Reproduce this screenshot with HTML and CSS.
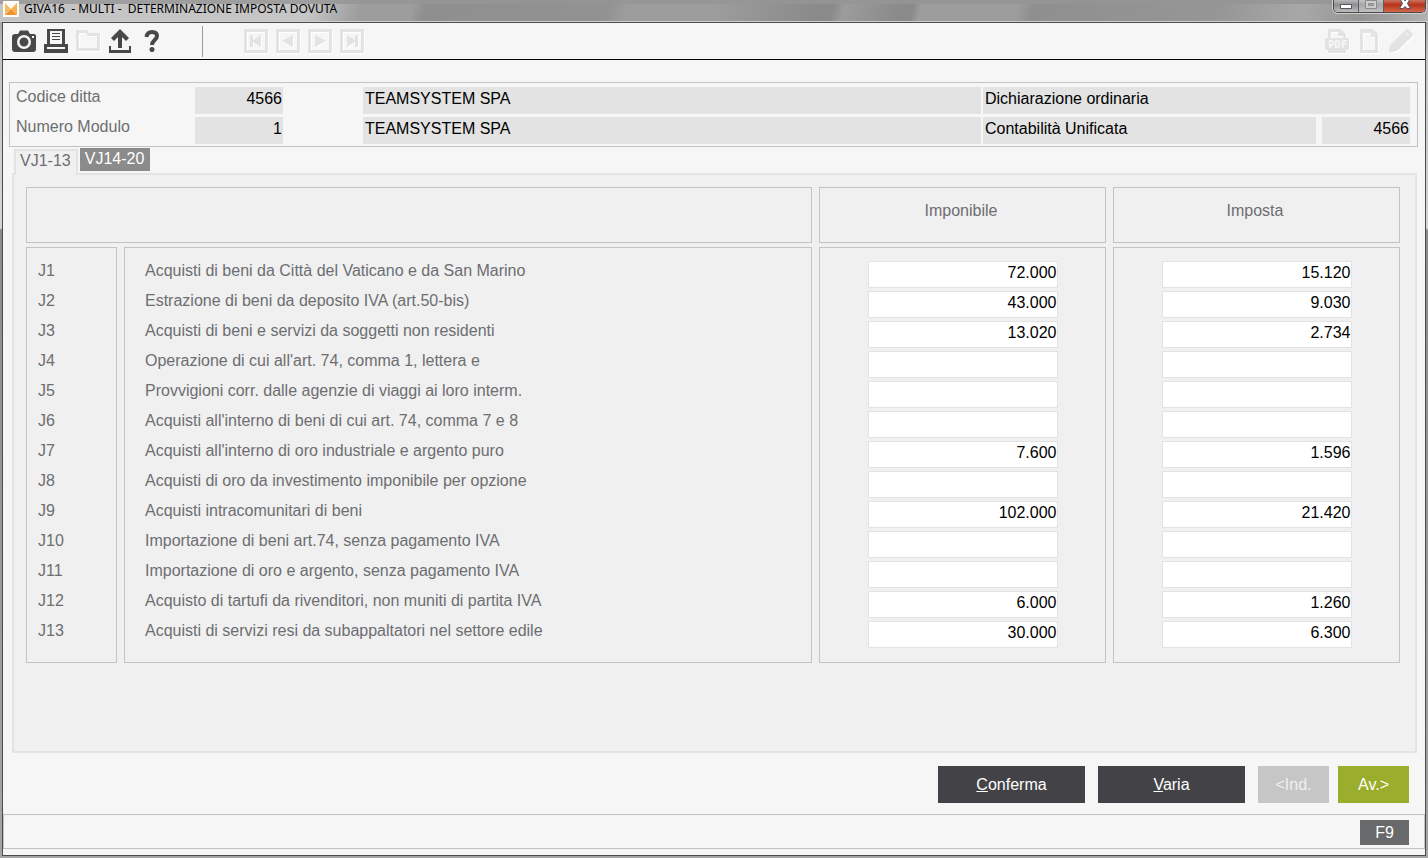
FILE: index.html
```
<!DOCTYPE html>
<html lang="it">
<head>
<meta charset="utf-8">
<title>GIVA16 - MULTI - DETERMINAZIONE IMPOSTA DOVUTA</title>
<link rel="stylesheet" href="styles.css">
</head>
<body>
<div class="window">
  <header class="titlebar">
    <svg class="app-icon" viewBox="0 0 16 16" aria-hidden="true"><path fill="#fdfbf5" d="M0 0h16v16H0z"/><path fill="#f8bb62" d="M2 2l6 6-6 6z"/><path fill="#f6b04c" d="M14 2L8 8l6 6z"/><path fill="#ee912c" d="M2 14l6-6 6 6z"/></svg>
    <h1 class="title">GIVA16  - MULTI -  DETERMINAZIONE IMPOSTA DOVUTA</h1>
    <div class="controls">
      <button class="control" type="button" aria-label="Riduci a icona"><svg width="12" height="5" viewBox="0 0 12 5"><path fill="#fff" stroke="#50576b" d="M.5.5h11v4H.5z"/></svg></button>
      <button class="control control-max" type="button" aria-label="Ingrandisci"><svg width="12" height="9" viewBox="0 0 12 9"><path fill="#ccc" stroke="#8b8b8b" d="M.5.5h11v8H.5zM3.500 3.500v2h5v-2z" fill-rule="evenodd"/></svg></button>
      <button class="control control-close" type="button" aria-label="Chiudi"><svg width="12" height="9" viewBox="0 0 12 9"><path fill="#fff" stroke="#4c5064" d="M1-1h3.500l1.500 2L7.500-1H11L8.500 3.500l3 5H8L6 6.500 4 8.500H.5l3-5z"/></svg></button>
    </div>
  </header>

  <div class="client">
    <nav class="toolbar" aria-label="Strumenti">
      <div class="tools">
        <button class="tool" type="button" aria-label="Cattura"><svg viewBox="0 0 24 24"><path fill-rule="evenodd" d="M8 1.500h8L18 5h4q2 0 2 2v13q0 3-3 3H3q-3 0-3-3V8q0-3 3-3h3zM12 6a7 7 0 1 0 0 14 7 7 0 0 0 0-14zm0 2.500a4.500 4.500 0 1 1 0 9 4.500 4.500 0 0 1 0-9zM20 7v2h2V7z"/></svg></button>
        <button class="tool" type="button" aria-label="Stampa"><svg viewBox="0 0 24 24"><path fill-rule="evenodd" d="M3 0h18v15h3v9H0v-9h3zM6 2v13h12V2zM3 18v2h18v-2z"/><path d="M8 4h8v1H8zM8 7h8v1H8zM8 10h8v1H8z"/></svg></button>
        <button class="tool" type="button" aria-label="Apri" disabled><svg viewBox="0 0 24 24"><path fill-rule="evenodd" d="M0 1h11l2 3h11v18H0zM3 4v15h18V7h-9L10 4z"/></svg></button>
        <button class="tool" type="button" aria-label="Esporta"><svg viewBox="0 0 24 24"><path d="M12 0l9 9-3 3-4-4v11h-4V8l-4 4-3-3z"/><path d="M1 17h2v4h18v-4h2v7H1z"/></svg></button>
        <button class="tool" type="button" aria-label="Aiuto"><svg viewBox="0 0 24 24"><path fill="none" stroke="currentColor" stroke-width="4" d="M6.500 8C7 4.500 9 3 12 3c3.500 0 5 1.500 5 4 0 4-5 4-5 9"/><circle cx="12" cy="20.500" r="2.500"/></svg></button>
      </div>
      <div class="record-nav">
        <button class="tool" type="button" aria-label="Primo" disabled><svg viewBox="0 0 24 24"><path fill-rule="evenodd" d="M0 0h24v24H0zM3 3v18h18V3z"/><path d="M6 6h3v5l8-5v12l-8-5v5H6z"/></svg></button>
        <button class="tool" type="button" aria-label="Precedente" disabled><svg viewBox="0 0 24 24"><path fill-rule="evenodd" d="M0 0h24v24H0zM3 3v18h18V3z"/><path d="M6 12l11-6v12z"/></svg></button>
        <button class="tool" type="button" aria-label="Successivo" disabled><svg viewBox="0 0 24 24"><path fill-rule="evenodd" d="M0 0h24v24H0zM3 3v18h18V3z"/><path d="M18 12L7 6v12z"/></svg></button>
        <button class="tool" type="button" aria-label="Ultimo" disabled><svg viewBox="0 0 24 24"><path fill-rule="evenodd" d="M0 0h24v24H0zM3 3v18h18V3z"/><path d="M18 6h-3v5L7 6v12l8-5v5h3z"/></svg></button>
      </div>
      <div class="tools tools-end">
        <button class="tool" type="button" aria-label="PDF" disabled><svg viewBox="0 0 24 24"><path fill-rule="evenodd" d="M3 0h13l5 5v4h3v12h-3v3H3v-3H0V9h3zM6 3v6h12V7h-5V3z"/><path fill="none" stroke="#f8f8f8" stroke-width="1.500" d="M4.700 19v-7h2q1.700 0 1.700 2t-1.700 2h-2M10.700 12v6.300h1.500q2.200 0 2.200-3.100t-2.200-3.200zM17.700 19v-7H22M17.700 15h3.300"/></svg></button>
        <button class="tool" type="button" aria-label="Nuovo" disabled><svg viewBox="0 0 24 24"><path fill-rule="evenodd" d="M3 0h13l5 5v19H3zM6 4v17h12V8h-4V4z"/></svg></button>
        <button class="tool" type="button" aria-label="Modifica" disabled><svg viewBox="0 0 24 24"><path fill-rule="evenodd" d="M0 24l1-8L16.500 1Q18-.5 20 1l3 3q1.500 1.500 0 3.500L8 22zM16.500 4l3 3 .7-.7-3-3z"/></svg></button>
      </div>
    </nav>

    <main class="content">
      <section class="company" aria-label="Ditta">
        <label class="label" for="codice">Codice ditta</label>
        <input class="field field-num" id="codice" value="4566" readonly>
        <input class="field field-name" aria-label="Ragione sociale" value="TEAMSYSTEM SPA" readonly>
        <input class="field field-wide" aria-label="Dichiarazione" value="Dichiarazione ordinaria" readonly>
        <label class="label" for="modulo">Numero Modulo</label>
        <input class="field field-num" id="modulo" value="1" readonly>
        <input class="field field-name" aria-label="Denominazione modulo" value="TEAMSYSTEM SPA" readonly>
        <input class="field" aria-label="Contabilità" value="Contabilità Unificata" readonly>
        <input class="field field-num field-last" aria-label="Codice contabilità" value="4566" readonly>
      </section>

      <div class="tabs" role="tablist">
        <button class="tab tab-active" type="button" role="tab" aria-selected="true">VJ1-13</button>
        <button class="tab" type="button" role="tab" aria-selected="false">VJ14-20</button>
      </div>

      <section class="panel" role="tabpanel" aria-label="VJ1-13">
        <table class="grid">
          <colgroup><col class="col-code"><col><col class="col-amount"><col class="col-amount"></colgroup>
          <thead>
            <tr><th colspan="2"></th><th>Imponibile</th><th>Imposta</th></tr>
          </thead>
          <tbody>
            <tr><td>J1</td><td class="desc">Acquisti di beni da Città del Vaticano e da San Marino</td><td><input class="amount" aria-label="J1 imponibile" value="72.000"></td><td><input class="amount" aria-label="J1 imposta" value="15.120"></td></tr>
            <tr><td>J2</td><td class="desc">Estrazione di beni da deposito IVA (art.50-bis)</td><td><input class="amount" aria-label="J2 imponibile" value="43.000"></td><td><input class="amount" aria-label="J2 imposta" value="9.030"></td></tr>
            <tr><td>J3</td><td class="desc">Acquisti di beni e servizi da soggetti non residenti</td><td><input class="amount" aria-label="J3 imponibile" value="13.020"></td><td><input class="amount" aria-label="J3 imposta" value="2.734"></td></tr>
            <tr><td>J4</td><td class="desc">Operazione di cui all'art. 74, comma 1, lettera e</td><td><input class="amount" aria-label="J4 imponibile"></td><td><input class="amount" aria-label="J4 imposta"></td></tr>
            <tr><td>J5</td><td class="desc">Provvigioni corr. dalle agenzie di viaggi ai loro interm.</td><td><input class="amount" aria-label="J5 imponibile"></td><td><input class="amount" aria-label="J5 imposta"></td></tr>
            <tr><td>J6</td><td class="desc">Acquisti all'interno di beni di cui art. 74, comma 7 e 8</td><td><input class="amount" aria-label="J6 imponibile"></td><td><input class="amount" aria-label="J6 imposta"></td></tr>
            <tr><td>J7</td><td class="desc">Acquisti all'interno di oro industriale e argento puro</td><td><input class="amount" aria-label="J7 imponibile" value="7.600"></td><td><input class="amount" aria-label="J7 imposta" value="1.596"></td></tr>
            <tr><td>J8</td><td class="desc">Acquisti di oro da investimento imponibile per opzione</td><td><input class="amount" aria-label="J8 imponibile"></td><td><input class="amount" aria-label="J8 imposta"></td></tr>
            <tr><td>J9</td><td class="desc">Acquisti intracomunitari di beni</td><td><input class="amount" aria-label="J9 imponibile" value="102.000"></td><td><input class="amount" aria-label="J9 imposta" value="21.420"></td></tr>
            <tr><td>J10</td><td class="desc">Importazione di beni art.74, senza pagamento IVA</td><td><input class="amount" aria-label="J10 imponibile"></td><td><input class="amount" aria-label="J10 imposta"></td></tr>
            <tr><td>J11</td><td class="desc">Importazione di oro e argento, senza pagamento IVA</td><td><input class="amount" aria-label="J11 imponibile"></td><td><input class="amount" aria-label="J11 imposta"></td></tr>
            <tr><td>J12</td><td class="desc">Acquisto di tartufi da rivenditori, non muniti di partita IVA</td><td><input class="amount" aria-label="J12 imponibile" value="6.000"></td><td><input class="amount" aria-label="J12 imposta" value="1.260"></td></tr>
            <tr><td>J13</td><td class="desc">Acquisti di servizi resi da subappaltatori nel settore edile</td><td><input class="amount" aria-label="J13 imponibile" value="30.000"></td><td><input class="amount" aria-label="J13 imposta" value="6.300"></td></tr>
          </tbody>
        </table>
      </section>

      <div class="actions">
        <button class="btn btn-main" type="button"><u>C</u>onferma</button>
        <button class="btn btn-main" type="button"><u>V</u>aria</button>
        <div class="pager">
          <button class="btn btn-back" type="button" disabled>&lt;Ind.</button>
          <button class="btn btn-next" type="button">Av.&gt;</button>
        </div>
      </div>
    </main>

    <footer class="statusbar"><button class="key" type="button">F9</button></footer>
  </div>
</div>
</body>
</html>
```
FILE: styles.css
```
* { box-sizing: border-box; }

body {
  margin: 0;
  font: 16px/20px "Liberation Sans", Arial, sans-serif;
  color: #6d6e70;
}

button, input { font: inherit; border: 0; margin: 0; border-radius: 0; }
button { padding: 0; }

.window {
  display: flex;
  flex-direction: column;
  min-height: 100vh;
  padding: 0 2px 2px;
  background: linear-gradient(#989898 0, #c4c4c4 60px, #d6d6d6 228px, #8c8c8c 230px, #a5a5a5 100%);
}

/* Title bar */
.titlebar {
  display: flex;
  align-items: flex-start;
  height: 22px;
  margin: 0 -2px;
  border-bottom: 1px solid #cfcfcf;
  background:
    linear-gradient(rgba(149, 149, 149, .8) 4px, transparent 4px),
    linear-gradient(105deg, #c4c4c4 0, #c6c6c6 300px, #9d9d9d 350px, #9d9d9d 400px, #8f8f8f 412px, #929292 590px, #9d9d9d 608px, #9d9d9d 690px, #8a8a8a 790px, #8a8a8a 806px, #9c9c9c 818px, #8a8a8a 870px, #8a8a8a 884px, #9d9d9d 892px, #9d9d9d 985px, #8f8f8f 1000px, #969696 1180px, #a8a8a8 1260px, #949494 1320px, #b2b2b2 100%);
}

.app-icon { width: 16px; height: 16px; margin: 1px 5px 0 3px; }

.title {
  margin: 0;
  font: 400 12px/18px "Noto Sans", sans-serif;
  color: #000;
  white-space: pre;
}

.controls {
  display: flex;
  height: 13px;
  margin: 0 2px 0 auto;
  border: 1px solid #4a4a4a;
  border-top: 0;
  border-radius: 0 0 5px 5px;
  overflow: hidden;
  box-shadow: 0 0 0 1px #d0d0d0;
}

.control {
  display: flex;
  justify-content: center;
  align-items: flex-end;
  width: 25px;
  padding-bottom: 3px;
  border-right: 1px solid #5c5c5c;
  background: linear-gradient(#b9b9b9, #8e8e8e 40%, #bdbdbd);
}
.control-max { background: linear-gradient(#c4c4c4, #a8a8a8 40%, #c2c2c2); }
.control-close { width: 41px; border-right: 0; background: linear-gradient(#cc7361, #b7341b 40%, #d4674c); }

/* Client area */
.client {
  display: flex;
  flex: 1;
  flex-direction: column;
  padding-bottom: 6px;
  border: 1px solid #4c4c4c;
  background: #f6f6f6;
}

.toolbar {
  display: flex;
  align-items: center;
  height: 37px;
  padding: 0 12px 0 9px;
  border-bottom: 1px solid #000;
}
.tools, .record-nav { display: flex; align-items: center; gap: 8px; }
.tools-end { margin-left: auto; }
.record-nav { height: 31px; margin-left: 38px; padding-left: 41px; border-left: 1px solid #9b9b9b; }
.tool { width: 24px; height: 24px; background: none; color: #48484a; }
.tool:disabled { color: #e3e3e3; }
.tool svg { display: block; width: 24px; height: 24px; fill: currentColor; }
.tool:disabled svg { filter: drop-shadow(1px 1px 0 #fff); }

.content {
  display: flex;
  flex: 1;
  flex-direction: column;
  padding: 22px 7px 11px 6px;
}

/* Company data */
.company {
  display: grid;
  grid-template-columns: 179px 88px 700fr 333fr 94px;
  gap: 3px 0;
  padding: 4px 7px 2px 6px;
  border: 1px solid #c3c3c3;
}
.field {
  width: 100%;
  min-width: 0;
  height: 27px;
  padding: 0 2px 4px;
  background: #e3e3e3;
  color: #000;
}
.field-num { padding-right: 1px; text-align: right; }
.field-name { width: auto; margin: 0 2px 0 80px; }
.field-wide { grid-column: span 2; }
.field-last { width: auto; margin-left: 6px; }

/* Tabs */
.tabs { display: flex; align-items: flex-start; gap: 2px; height: 26px; padding: 1px 5px 0; }
.tab { height: 23px; padding: 0 6px 2px 5px; background: #8b8b8b; color: #fff; }
.tab-active {
  position: relative;
  height: 26px;
  margin-top: 1px;
  padding: 0 5px 4px 4px;
  border: 2px solid #e3e3e3;
  border-bottom: 0;
  background: #f0f0f0;
  color: #6d6e70;
}

.panel {
  flex: 1;
  margin: 0 1px 0 3px;
  padding: 12px 8px 24px 5px;
  border: 2px solid #e3e3e3;
  background: #f0f0f0;
}

/* Amounts grid */
.grid { width: 100%; table-layout: fixed; border-collapse: separate; border-spacing: 7px 0; }
.col-code { width: 91px; }
.col-amount { width: 287px; }
.grid th {
  height: 56px;
  padding: 0 3px 8px 0;
  border: 1px solid #c3c3c3;
  font-weight: 400;
}
.grid tbody::before { content: ""; display: table-row; height: 4px; }
.grid td {
  height: 30px;
  padding: 0 0 0 11px;
  border: 0 solid #c3c3c3;
  border-width: 0 1px;
  vertical-align: top;
}
.grid td.desc { padding-left: 20px; }
.grid td:nth-child(n+3) { padding-left: 0; }
.grid tr:first-child td { border-top-width: 1px; padding-top: 13px; }
.grid tbody tr:last-child td { border-bottom-width: 1px; padding-bottom: 11px; height: 42px; }
.grid tbody tr:first-child td { height: 44px; }
.amount {
  display: block;
  width: 190px;
  max-width: 100%;
  height: 27px;
  margin: 0 auto;
  padding: 0 0 4px;
  border: 1px solid #e3e3e3;
  background: #fff;
  color: #000;
  text-align: right;
}

/* Actions */
.actions { display: flex; justify-content: flex-end; gap: 13px; padding: 13px 9px 0; }
.pager { display: flex; gap: 9px; }
.btn { height: 37px; color: #fff; }
.btn-main { width: 147px; background: #434347; }
.btn-back { width: 71px; background: #c6c6c6; color: #f0f0f0; }
.btn-next { width: 71px; background: #9aad2c; }

.statusbar {
  display: flex;
  justify-content: flex-end;
  padding: 5px 15px 3px;
  border: 1px solid #c3c3c3;
}
.key { width: 49px; height: 25px; background: #68696b; color: #fff; }
```
